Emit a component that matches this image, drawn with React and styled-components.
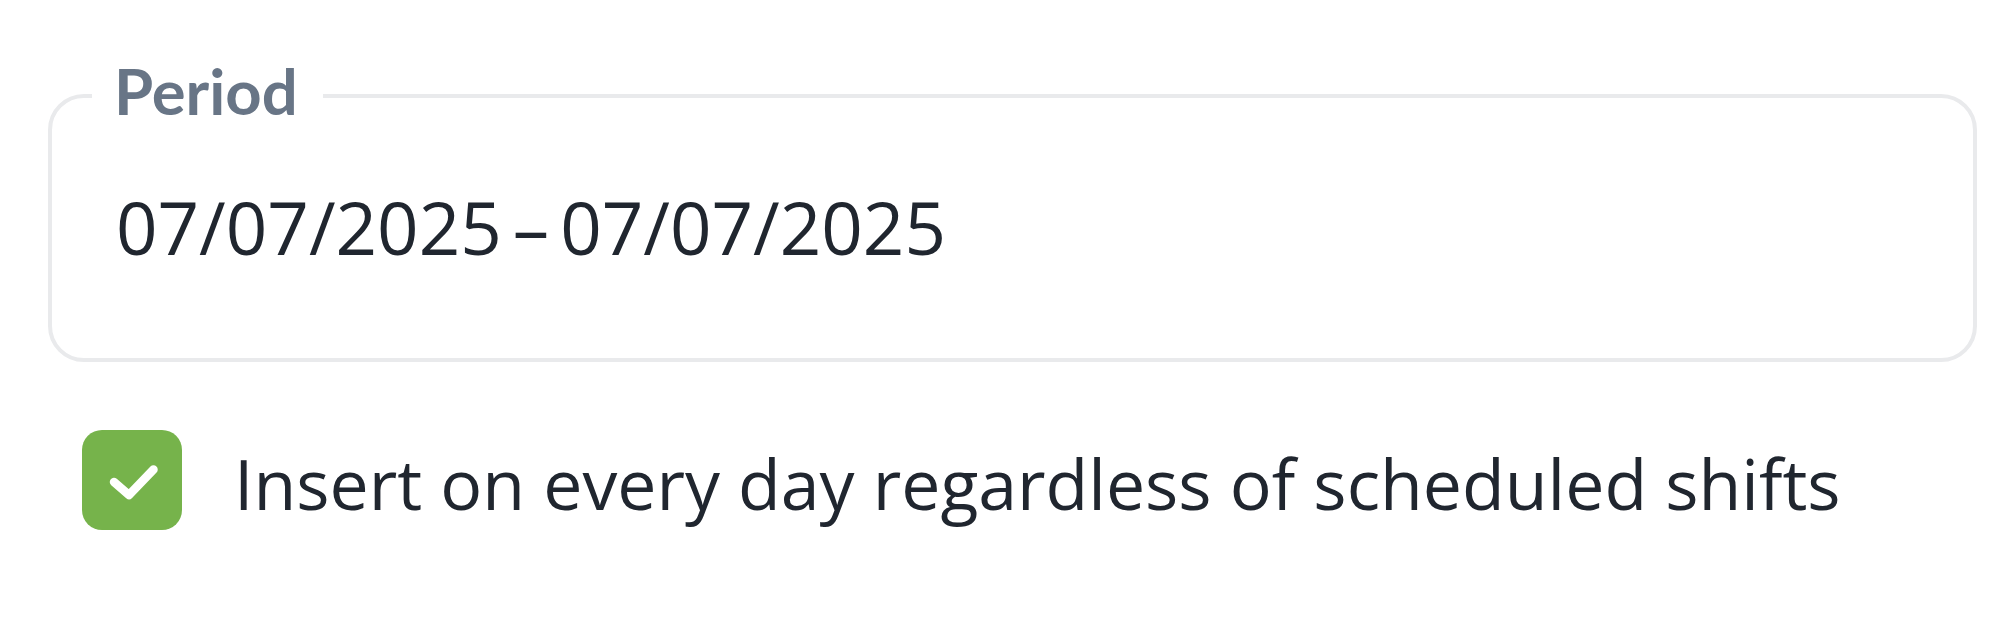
import React, { useState } from "react";
import styled, { createGlobalStyle } from "styled-components";

const GlobalStyle = createGlobalStyle`
  body {
    margin: 0;
    background: #ffffff;
    font-family: "Open Sans", "Liberation Sans", sans-serif;
  }
`;

const Pagina = styled.div`
  padding: 60px 29px 0 48px;
`;

const Campo = styled.fieldset`
  margin: 0;
  padding: 0 40px;
  border: 4px solid #e9eaec;
  border-radius: 36px;
  min-width: 0;
`;

const Leyenda = styled.legend`
  padding: 0 25px 10px 22px;
  font-family: Lato, "Open Sans", sans-serif;
  font-weight: 700;
  font-size: 63.4px;
  line-height: 62px;
  color: #687586;
`;

const Valor = styled.div`
  display: flex;
  align-items: baseline;
  padding: 47px 0 83px 24px;
  font-size: 72.7px;
  line-height: 96px;
  color: #20262f;
  white-space: nowrap;
`;

const Guion = styled.span`
  margin: 0 11px;
`;

const Fila = styled.label`
  display: flex;
  align-items: center;
  gap: 52px;
  margin-top: 68px;
  padding-left: 34px;
  cursor: pointer;
`;

const Caja = styled.span`
  display: flex;
  align-items: center;
  justify-content: center;
  width: 100px;
  height: 100px;
  flex-shrink: 0;
  border-radius: 20px;
  background: ${(props) => (props.$activo ? "#76b34b" : "#ffffff")};
  border: ${(props) => (props.$activo ? "none" : "4px solid #e9eaec")};
  box-sizing: border-box;
`;

const Texto = styled.span`
  padding-top: 5px;
  font-size: 69.8px;
  line-height: 95px;
  color: #20262f;
  white-space: nowrap;
`;

const Check = () => (
  <svg width="100" height="100" viewBox="0 0 100 100" fill="none">
    <polyline
      points="32,52 47,65 71.5,39.5"
      stroke="#ffffff"
      strokeWidth="8.5"
      strokeLinecap="round"
      strokeLinejoin="round"
    />
  </svg>
);

const App = () => {
  const [marcado, cambiarMarcado] = useState(true);

  return (
    <Pagina>
      <GlobalStyle />
      <Campo>
        <Leyenda>Period</Leyenda>
        <Valor>
          <span>07/07/2025</span>
          <Guion>–</Guion>
          <span>07/07/2025</span>
        </Valor>
      </Campo>
      <Fila onClick={() => cambiarMarcado(!marcado)}>
        <Caja $activo={marcado}>{marcado ? <Check /> : null}</Caja>
        <Texto>Insert on every day regardless of scheduled shifts</Texto>
      </Fila>
    </Pagina>
  );
};

export default App;
